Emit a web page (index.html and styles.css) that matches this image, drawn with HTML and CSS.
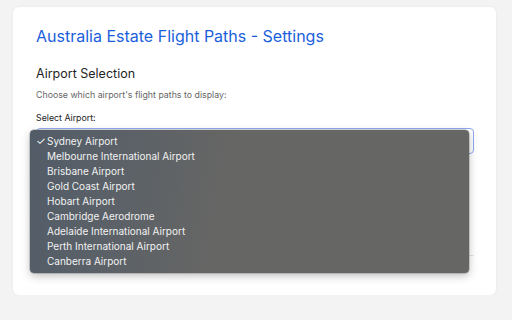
FILE: index.html
```html
<!DOCTYPE html>
<html>
<head>
<meta charset="utf-8">
<link rel="stylesheet" href="styles.css">
</head>
<body>
<div class="card">
  <h1 class="title">Australia Estate Flight Paths - Settings</h1>
  <h2 class="section">Airport Selection</h2>
  <p class="desc">Choose which airport's flight paths to display:</p>
  <label class="label">Select Airport:</label>
  <div class="select-wrap">
    <div class="select">
      <span class="current">Sydney Airport</span>
      <svg class="chev" width="6" height="4" viewBox="0 0 6 4"><path d="M0.5 0.5 L3 3 L5.5 0.5" fill="none" stroke="#555" stroke-width="1"/></svg>
    </div>
    <ul class="menu">
      <li class="checked"><span class="check">✓</span>Sydney Airport</li>
      <li>Melbourne International Airport</li>
      <li>Brisbane Airport</li>
      <li>Gold Coast Airport</li>
      <li>Hobart Airport</li>
      <li>Cambridge Aerodrome</li>
      <li>Adelaide International Airport</li>
      <li>Perth International Airport</li>
      <li>Canberra Airport</li>
    </ul>
  </div>
  <div class="divider"></div>
</div>
</body>
</html>
```

FILE: styles.css
```css
html, body {
  margin: 0;
  padding: 0;
  background: #f3f3f3;
  font-family: Inter, "Liberation Sans", sans-serif;
}
.card {
  margin: 7px 16px 0 13px;
  height: 288px;
  box-sizing: border-box;
  background: #ffffff;
  border-radius: 6px;
  box-shadow: 0 0 3px rgba(0,0,0,0.06);
  padding: 18px 22px 0 23px;
}
.title {
  margin: 0;
  font-size: 16px;
  font-weight: 400;
  color: #1b5fdc;
  line-height: 22px;
}
.section {
  margin: 18px 0 0 0;
  font-size: 12.5px;
  font-weight: 400;
  color: #1f1f1f;
  line-height: 18px;
}
.desc {
  margin: 6px 0 0 0;
  font-size: 8.8px;
  color: #666;
  line-height: 12px;
}
.label {
  display: block;
  margin-top: 11px;
  font-size: 8.8px;
  color: #222;
  line-height: 12px;
}
.select-wrap {
  position: relative;
  margin-top: 4px;
}
.select {
  height: 26px;
  box-sizing: border-box;
  border: 1.5px solid #8fa8ef;
  border-radius: 4px;
  display: flex;
  align-items: center;
  justify-content: space-between;
  padding: 0 4px 0 8px;
  font-size: 10px;
  color: #222;
}
.menu {
  position: absolute;
  left: -6px;
  top: 2px;
  width: 439px;
  height: 143px;
  box-sizing: border-box;
  margin: 0;
  padding: 4px 0;
  list-style: none;
  border-radius: 4px;
  background: linear-gradient(100deg, #525c68 0%, #5d6267 25%, #666664 45%, #666665 100%);
  box-shadow: 0 3px 8px rgba(0,0,0,0.25), 0 0 0 0.5px rgba(0,0,0,0.3);
}
.menu li {
  height: 15px;
  line-height: 15px;
  padding-left: 17px;
  font-size: 10px;
  color: #f2f2f2;
  position: relative;
}
.check {
  position: absolute;
  left: 6px;
  top: 0;
  font-size: 11px;
}
.divider {
  margin-top: 101px;
  border-bottom: 1px solid #e4e4e4;
}
```
